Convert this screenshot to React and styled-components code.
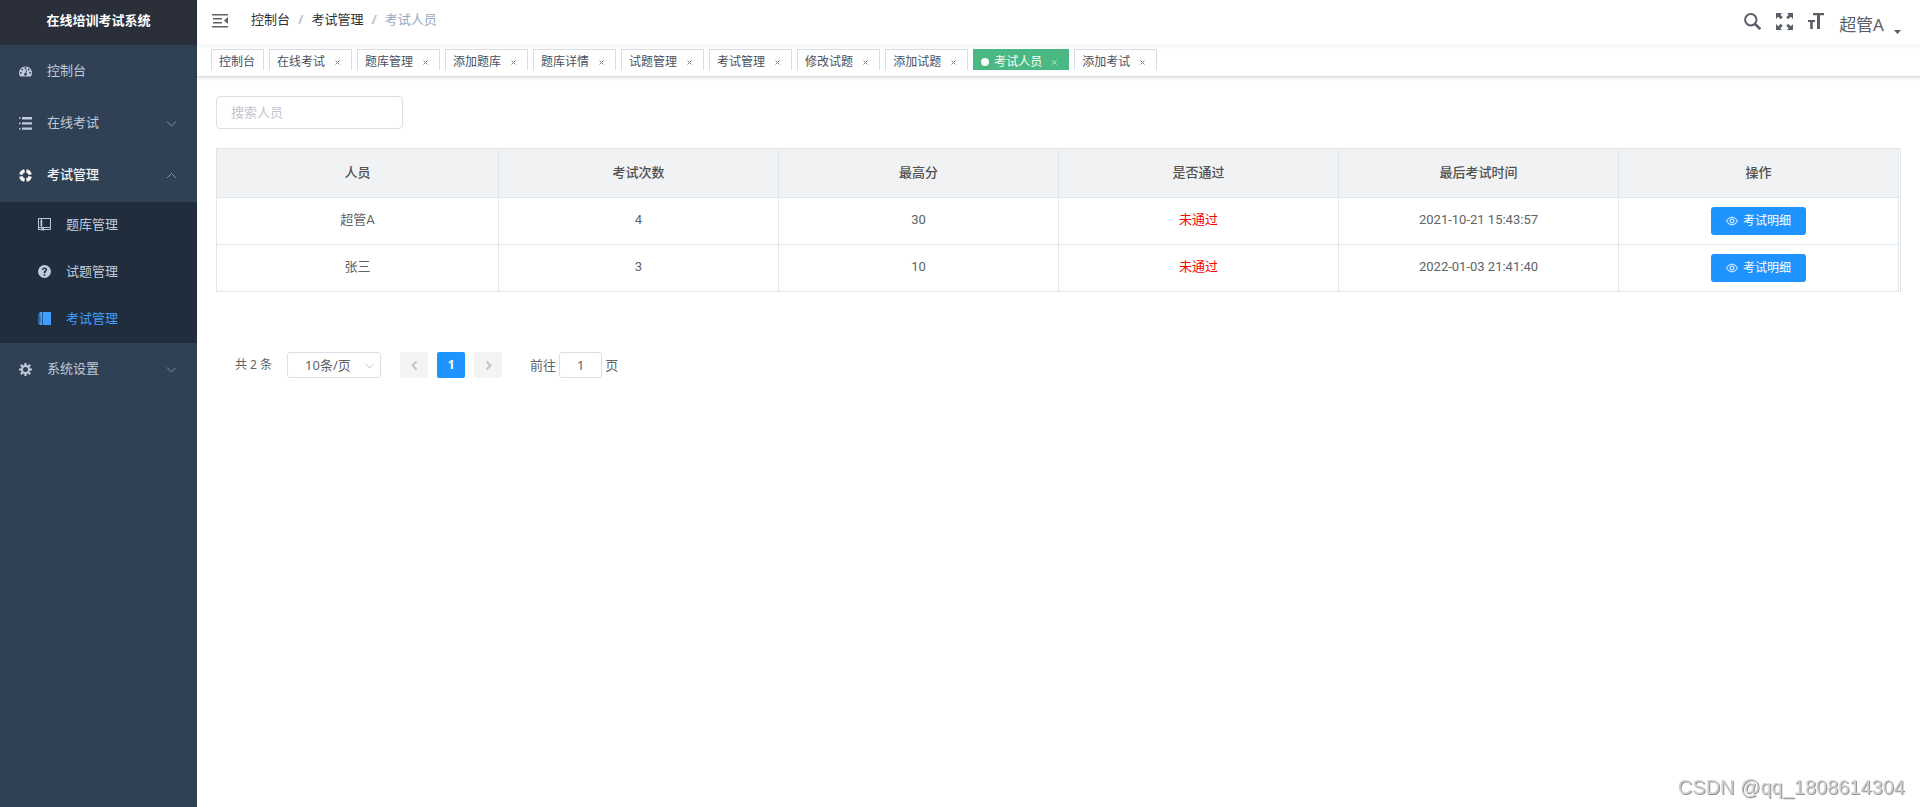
import React from "react";
import styled, { createGlobalStyle, css } from "styled-components";

const GlobalStyle = createGlobalStyle`
  *, *::before, *::after { box-sizing: border-box; }
  html, body, #root { height: 100%; }
  body {
    margin: 0;
    background: #fff;
    color: #606266;
    font: 13px/20px "Noto Sans", "Noto Sans CJK SC", sans-serif;
  }
  button, input, select { font: inherit; color: inherit; }
  button { cursor: pointer; }
  a { color: inherit; text-decoration: none; }
  ul, ol { list-style: none; margin: 0; padding: 0; }
`;

const Page = styled.div`
  display: flex;
  min-height: 100%;
`;

/* Sidebar */
const Sidebar = styled.aside`
  flex: none;
  width: 197px;
  background: #304156;
`;
const Brand = styled.h1`
  margin: 0;
  height: 45px;
  padding-top: 10px;
  background: #2b2f3a;
  color: #fff;
  font-size: 13px;
  line-height: 20px;
  font-weight: 700;
  text-align: center;
`;
const MenuItem = styled.a`
  display: flex;
  align-items: center;
  gap: 15px;
  height: 52px;
  padding: 0 20px 0 19px;
  color: ${(p) => (p.$open ? "#f4f4f5" : "#bfcbd9")};
  font-weight: ${(p) => (p.$open ? 500 : 400)};
`;
const MenuLabel = styled.span`
  flex: 1;
  padding-bottom: 2px;
`;
const SubMenu = styled.ul`
  margin-top: 1px;
  background: #1f2d3d;
`;
const SubItem = styled(MenuItem)`
  height: 47px;
  padding-left: 38px;
  padding-bottom: 2px;
  color: ${(p) => (p.$active ? "#409eff" : "#bfcbd9")};
`;
const Icon = styled.svg`
  flex: none;
  display: block;
  width: ${(p) => p.$size || 13}px;
  height: ${(p) => p.$size || 13}px;
  fill: currentColor;
`;
const LineIcon = styled(Icon)`
  fill: none;
  stroke: ${(p) => p.$color || "currentColor"};
  stroke-width: ${(p) => p.$weight || 1};
`;

/* Header */
const Main = styled.main`
  flex: 1;
  min-width: 0;
`;
const Navbar = styled.header`
  display: flex;
  align-items: center;
  height: 45px;
  padding: 0 19px 3px 15px;
  box-shadow: 0 1px 4px rgba(0, 21, 41, 0.08);
`;
const IconButton = styled.button`
  display: flex;
  padding: 0;
  border: 0;
  background: none;
`;
const Crumbs = styled.ol`
  display: flex;
  flex: 1;
  height: 24px;
  margin-left: 23px;
  color: #303133;
  li + li::before {
    content: "/";
    margin: 0 8px;
    color: #c0c4cc;
    font-weight: 700;
  }
`;
const Crumb = styled.li`
  color: ${(p) => (p.$current ? "#97a8be" : "inherit")};
`;
const Tools = styled.div`
  display: flex;
  align-items: center;
  gap: 15px;
  color: #5a5e66;
`;
const UserButton = styled(IconButton)`
  align-items: flex-end;
  gap: 10px;
  padding-top: 8px;
  font-size: 17px;
  line-height: 24px;
`;

const TagBar = styled.nav`
  height: 32px;
  padding: 4px 14px 0;
  border-bottom: 1px solid #d8dce5;
  box-shadow: 0 1px 3px rgba(0, 0, 0, 0.12);
`;
const TagList = styled.ul`
  display: flex;
  gap: 5px;
  height: 21px;
  overflow: hidden;
`;
const Tag = styled.li`
  display: flex;
  align-items: center;
  flex: none;
  height: 26px;
  padding: 0 7px;
  border: 1px solid #d8dce5;
  color: #495060;
  font-size: 12px;
  line-height: 24px;
  &:first-child { padding-right: 8px; }
  ${(p) =>
    p.$active &&
    css`
      border-color: #4ab883;
      background: #4ab883;
      color: #fff;
      &::before {
        content: "";
        width: 8px;
        height: 8px;
        margin-right: 5px;
        border-radius: 50%;
        background: #fff;
      }
    `}
`;
const CloseButton = styled(IconButton)`
  width: 13px;
  margin-left: 6px;
  justify-content: center;
  opacity: 0.7;
`;

/* Content */
const Content = styled.section`
  padding: 19px;
`;
const SearchInput = styled.input`
  display: block;
  width: 187px;
  height: 33px;
  padding: 0 14px 2px;
  border: 1px solid #dcdfe6;
  border-radius: 4px;
  background: #fff;
  &::placeholder { color: #c0c4cc; opacity: 1; }
`;
const TableFrame = styled.div`
  margin-top: 19px;
  padding-right: 1px;
  border: 1px solid #dfe6ec;
  border-bottom: 0;
`;
const Table = styled.table`
  width: 100%;
  table-layout: fixed;
  border-collapse: separate;
  border-spacing: 0;
  text-align: center;
`;
const cell = css`
  padding: 0 0 2px;
  border: solid #dfe6ec;
  border-width: 0 1px 1px 0;
`;
const HeadCell = styled.th`
  ${cell}
  width: 280px;
  height: 49px;
  background: #f1f2f4;
  color: #515151;
  font-weight: 500;
  &:first-child { width: auto; }
  @media (max-width: 1919px) { width: auto; }
`;
const Cell = styled.td`
  ${cell}
  height: 47px;
  color: ${(p) => (p.$fail ? "#f00" : "inherit")};
  font-family: Roboto, "Noto Sans CJK SC", sans-serif;
`;
const ActionCell = styled(Cell)`
  padding: 0;
`;
const DetailButton = styled.button`
  display: inline-flex;
  align-items: center;
  gap: 5px;
  height: 28px;
  padding: 0 15px;
  border: 0;
  border-radius: 3px;
  background: #1f94ff;
  color: #fff;
  font-size: 12px;
  vertical-align: middle;
`;

const Pagination = styled.footer`
  display: flex;
  align-items: center;
  margin-top: 60px;
  padding: 0 19px;
`;
const Total = styled.span`
  font-size: 12px;
`;
const SelectBox = styled.div`
  display: grid;
  align-items: center;
  width: 94px;
  margin: 0 19px 0 15px;
  & > * { grid-area: 1 / 1; }
  & > svg { justify-self: end; margin-right: 6px; pointer-events: none; }
`;
const PageSelect = styled.select`
  appearance: none;
  height: 26px;
  padding: 0 17px;
  border: 1px solid #dcdfe6;
  border-radius: 3px;
  background: #fff;
`;
const Pager = styled.div`
  display: flex;
  gap: 9px;
`;
const PageButton = styled.button`
  display: flex;
  align-items: center;
  justify-content: center;
  width: 28px;
  height: 26px;
  padding: 0;
  border: 0;
  border-radius: 2px;
  background: ${(p) => (p.$active ? "#1f94ff" : "#f4f4f5")};
  color: ${(p) => (p.$active ? "#fff" : "#c0c4cc")};
  font-size: 12px;
  font-weight: 700;
`;
const Jumper = styled.label`
  display: flex;
  align-items: center;
  gap: 3px;
  margin-left: 28px;
`;
const JumpInput = styled.input`
  width: 43px;
  height: 26px;
  padding: 0;
  border: 1px solid #dcdfe6;
  border-radius: 3px;
  text-align: center;
`;
const Watermark = styled.div`
  position: fixed;
  right: 15px;
  bottom: 8px;
  color: #d0d0d0;
  font: 20px/24px "Liberation Sans", sans-serif;
  text-shadow: 1px 1px 0 #949494;
  pointer-events: none;
`;

const Chevron = ({ up }) => (
  <LineIcon $size={11} $color="#8590a0" viewBox="0 0 11 11" aria-hidden="true">
    <path d={up ? "M1 8 5.500 3.500 10 8" : "M1 3.500 5.500 8 10 3.500"} />
  </LineIcon>
);

const DashboardIcon = () => (
  <Icon viewBox="0 0 128 100" aria-hidden="true">
    <path d="M27.429 63.638c0-2.508-.893-4.650-2.679-6.424-1.786-1.775-3.940-2.662-6.464-2.662-2.524 0-4.679.887-6.465 2.662-1.785 1.774-2.678 3.916-2.678 6.424 0 2.508.893 4.650 2.678 6.424 1.786 1.775 3.940 2.662 6.465 2.662 2.524 0 4.678-.887 6.464-2.662 1.786-1.775 2.679-3.916 2.679-6.424zm13.714-31.801c0-2.508-.893-4.650-2.679-6.424-1.785-1.775-3.940-2.662-6.464-2.662-2.524 0-4.679.887-6.464 2.662-1.786 1.774-2.679 3.916-2.679 6.424 0 2.508.893 4.650 2.679 6.424 1.785 1.774 3.940 2.662 6.464 2.662 2.524 0 4.679-.888 6.464-2.662 1.786-1.775 2.679-3.916 2.679-6.424zM71.714 65.980l7.215-27.116c.285-1.230.107-2.378-.536-3.443-.643-1.064-1.560-1.762-2.750-2.094-1.190-.33-2.333-.177-3.429.462-1.095.639-1.810 1.573-2.143 2.804l-7.214 27.116c-2.857.237-5.405 1.266-7.643 3.088-2.238 1.822-3.738 4.152-4.500 6.992-.952 3.644-.476 7.098 1.429 10.364 1.905 3.265 4.690 5.370 8.357 6.317 3.667.947 7.143.474 10.429-1.420 3.285-1.892 5.404-4.660 6.357-8.305.762-2.840.619-5.607-.429-8.305-1.047-2.697-2.762-4.850-5.143-6.460zm47.143-2.342c0-2.508-.893-4.650-2.678-6.424-1.786-1.775-3.940-2.662-6.465-2.662-2.524 0-4.678.887-6.464 2.662-1.786 1.774-2.679 3.916-2.679 6.424 0 2.508.893 4.650 2.679 6.424 1.786 1.775 3.940 2.662 6.464 2.662 2.524 0 4.679-.887 6.465-2.662 1.785-1.775 2.678-3.916 2.678-6.424zm-45.714-45.430c0-2.509-.893-4.650-2.679-6.425C68.679 10.010 66.524 9.122 64 9.122c-2.524 0-4.679.887-6.464 2.661-1.786 1.775-2.679 3.916-2.679 6.425 0 2.508.893 4.650 2.679 6.424 1.785 1.774 3.940 2.662 6.464 2.662 2.524 0 4.679-.888 6.464-2.662 1.786-1.775 2.679-3.916 2.679-6.424zm32 13.629c0-2.508-.893-4.650-2.679-6.424-1.785-1.775-3.940-2.662-6.464-2.662-2.524 0-4.679.887-6.464 2.662-1.786 1.774-2.679 3.916-2.679 6.424 0 2.508.893 4.650 2.679 6.424 1.785 1.774 3.940 2.662 6.464 2.662 2.524 0 4.679-.888 6.464-2.662 1.786-1.775 2.679-3.916 2.679-6.424zM128 63.638c0 12.351-3.357 23.780-10.071 34.286-.905 1.372-2.190 2.058-3.858 2.058H13.930c-1.667 0-2.953-.686-3.858-2.058C3.357 87.465 0 76.037 0 63.638c0-8.613 1.690-16.847 5.071-24.703C8.452 31.080 13 24.312 18.714 18.634c5.715-5.680 12.524-10.199 20.429-13.559C47.048 1.715 55.333.035 64 .035c8.667 0 16.952 1.680 24.857 5.040 7.905 3.360 14.714 7.880 20.429 13.559 5.714 5.678 10.262 12.446 13.643 20.301 3.380 7.856 5.071 16.090 5.071 24.703z" />
  </Icon>
);
const ListIcon = () => (
  <Icon viewBox="0 0 13 13" aria-hidden="true">
    <path d="M0 .2h1.600v1.600H0zM3 0h10v2.400H3zM0 5.600h1.600v1.600H0zM3 5.200h10v2.400H3zM0 11h1.600v1.600H0zM3 10.400h10v2.400H3z" />
  </Icon>
);
const RingIcon = () => (
  <LineIcon viewBox="0 0 13 13" $weight={3.4} aria-hidden="true">
    <path d="M7.400 1.880A4.700 4.700 0 0 1 11.120 5.600M11.120 7.400A4.700 4.700 0 0 1 7.400 11.120M5.600 11.120A4.700 4.700 0 0 1 1.880 7.400M1.880 5.600A4.700 4.700 0 0 1 5.600 1.880" />
  </LineIcon>
);
const GearIcon = () => (
  <LineIcon viewBox="0 0 14 14" aria-hidden="true">
    <circle cx="7" cy="7" r="3.800" strokeWidth="2.200" />
    <path d="M7 0v3M7 11v3M0 7h3M11 7h3M2 2l2 2M10 10l2 2M12 2l-2 2M4 10l-2 2" strokeWidth="2.400" />
  </LineIcon>
);
const BookIcon = () => (
  <LineIcon viewBox="0 0 13 13" aria-hidden="true">
    <path d="M3.500.5h9v9h-9zM.5 12V.5h3M2 3h2.500M2 5h2.500M2 7h2.500M.5 11.500h3M6 11.500h6.500v-2M.5 9.500h3" />
    <path d="M3.500 10v3l1.200-1L6 13v-3z" fill="currentColor" stroke="none" />
  </LineIcon>
);
const QuestionIcon = () => (
  <Icon viewBox="0 0 13 13" aria-hidden="true">
    <path fillRule="evenodd" d="M6.500 0a6.500 6.500 0 1 1 0 13 6.500 6.500 0 0 1 0-13zM5.700 9.200v1.600h1.600V9.200zM4 5h1.500c0-.8.400-1.300 1-1.300s1 .4 1 .9c0 1.200-1.800 1.300-1.800 3.200v.5h1.500c0-1.600 1.900-1.700 1.900-3.700C9.100 3.200 8 2.400 6.500 2.400S4 3.400 4 5z" />
  </Icon>
);
const NotebookIcon = () => (
  <Icon viewBox="0 0 13 13" aria-hidden="true">
    <path d="M4.600 0H13v13H4.600zM1.500 0H4v13H1.500v-1.500H0v-1h2.500v-1H0v-1h2.500v-1H0v-1h2.500v-1H0v-1h2.500v-1H0v-1h1.500z" />
  </Icon>
);
const FoldIcon = () => (
  <Icon $size={16} viewBox="0 0 16 16" aria-hidden="true">
    <path d="M0 1h16v1.600H0zM1 5h9v1.600H1zM1 9h9v1.600H1zM0 13h16v1.600H0zM16 4v7L12 7.500z" />
  </Icon>
);
const SearchIcon = () => (
  <LineIcon $size={17} $weight={2} viewBox="0 0 17 17" aria-hidden="true">
    <circle cx="6.800" cy="6.800" r="5.700" />
    <path d="m10.800 10.800 5.500 5.300" strokeWidth="2.600" />
  </LineIcon>
);
const FullscreenIcon = () => (
  <Icon $size={17} viewBox="0 0 17 17" aria-hidden="true">
    <path d="M0 0h6L4.300 1.700l2.500 2.500-2.100 2.100-2.500-2.500L0 6zM17 0v6l-2.200-2.200-2.500 2.500-2.100-2.100 2.500-2.500L11 0zM0 17v-6l2.200 2.200 2.500-2.500 2.100 2.100-2.500 2.500L6 17zM17 17h-6l1.700-1.700-2.500-2.500 2.100-2.100 2.500 2.500L17 11z" />
  </Icon>
);
const FontSizeIcon = () => (
  <Icon $size={16} viewBox="0 0 16 16" aria-hidden="true">
    <path d="M5 0h11v2.200h-4V16H9V2.200H5zM0 7h7v2H4.800v7H2.200V9H0z" />
  </Icon>
);
const CaretIcon = () => (
  <Icon $size={7} viewBox="0 0 7 7" aria-hidden="true">
    <path d="M0 0h7L3.500 4z" />
  </Icon>
);
const CloseIcon = () => (
  <LineIcon $size={5} viewBox="0 0 5 5" aria-hidden="true">
    <path d="m.5.5 4 4m0-4-4 4" />
  </LineIcon>
);
const EyeIcon = () => (
  <LineIcon $size={12} viewBox="0 0 12 12" aria-hidden="true">
    <path d="M.5 6C3.500.9 8.500.9 11.500 6 8.500 11.100 3.500 11.100.5 6z" />
    <circle cx="6" cy="6" r="2" />
  </LineIcon>
);
const ArrowIcon = ({ d, color = "currentColor", weight = 2 }) => (
  <LineIcon $size={11} $weight={weight} $color={color} viewBox="0 0 11 11" aria-hidden="true">
    <path d={d} />
  </LineIcon>
);

const tags = [
  "控制台", "在线考试", "题库管理", "添加题库", "题库详情", "试题管理",
  "考试管理", "修改试题", "添加试题", "考试人员", "添加考试",
];
const columns = ["人员", "考试次数", "最高分", "是否通过", "最后考试时间", "操作"];
const people = [
  { name: "超管A", times: 4, best: 30, result: "未通过", last: "2021-10-21 15:43:57" },
  { name: "张三", times: 3, best: 10, result: "未通过", last: "2022-01-03 21:41:40" },
];

export default function App() {
  return (
    <>
      <GlobalStyle />
      <Page>
        <Sidebar>
          <Brand>在线培训考试系统</Brand>
          <nav>
            <MenuItem href="#dashboard"><DashboardIcon /><MenuLabel>控制台</MenuLabel></MenuItem>
            <MenuItem href="#online"><ListIcon /><MenuLabel>在线考试</MenuLabel><Chevron /></MenuItem>
            <MenuItem href="#exam" $open><RingIcon /><MenuLabel>考试管理</MenuLabel><Chevron up /></MenuItem>
            <SubMenu>
              <li><SubItem href="#repo"><BookIcon /><MenuLabel>题库管理</MenuLabel></SubItem></li>
              <li><SubItem href="#question"><QuestionIcon /><MenuLabel>试题管理</MenuLabel></SubItem></li>
              <li><SubItem href="#exams" $active><NotebookIcon /><MenuLabel>考试管理</MenuLabel></SubItem></li>
            </SubMenu>
            <MenuItem href="#system"><GearIcon /><MenuLabel>系统设置</MenuLabel><Chevron /></MenuItem>
          </nav>
        </Sidebar>
        <Main>
          <Navbar>
            <IconButton aria-label="折叠菜单"><FoldIcon /></IconButton>
            <Crumbs>
              <Crumb><a href="#dashboard">控制台</a></Crumb>
              <Crumb><a href="#exam">考试管理</a></Crumb>
              <Crumb $current>考试人员</Crumb>
            </Crumbs>
            <Tools>
              <IconButton aria-label="搜索"><SearchIcon /></IconButton>
              <IconButton aria-label="全屏"><FullscreenIcon /></IconButton>
              <IconButton aria-label="字号"><FontSizeIcon /></IconButton>
              <UserButton>超管A<CaretIcon /></UserButton>
            </Tools>
          </Navbar>
          <TagBar>
            <TagList>
              {tags.map((name, i) => (
                <Tag key={name} $active={name === "考试人员"}>
                  <a href={`#tag-${i}`}>{name}</a>
                  {i > 0 && <CloseButton aria-label={`关闭${name}`}><CloseIcon /></CloseButton>}
                </Tag>
              ))}
            </TagList>
          </TagBar>
          <Content>
            <SearchInput type="text" placeholder="搜索人员" aria-label="搜索人员" />
            <TableFrame>
              <Table>
                <thead>
                  <tr>{columns.map((c) => <HeadCell key={c} scope="col">{c}</HeadCell>)}</tr>
                </thead>
                <tbody>
                  {people.map((p) => (
                    <tr key={p.name}>
                      <Cell>{p.name}</Cell>
                      <Cell>{p.times}</Cell>
                      <Cell>{p.best}</Cell>
                      <Cell $fail>{p.result}</Cell>
                      <Cell>{p.last}</Cell>
                      <ActionCell><DetailButton><EyeIcon />考试明细</DetailButton></ActionCell>
                    </tr>
                  ))}
                </tbody>
              </Table>
            </TableFrame>
            <Pagination>
              <Total>共 2 条</Total>
              <SelectBox>
                <PageSelect aria-label="每页条数" defaultValue="10">
                  <option value="10">10条/页</option>
                  <option value="20">20条/页</option>
                </PageSelect>
                <ArrowIcon d="M1.500 4 5.500 8l4-4" color="#c0c4cc" weight={1} />
              </SelectBox>
              <Pager>
                <PageButton aria-label="上一页"><ArrowIcon d="M7.500 1.500 3.500 5.500l4 4" /></PageButton>
                <PageButton $active>1</PageButton>
                <PageButton aria-label="下一页"><ArrowIcon d="m3.500 1.500 4 4-4 4" /></PageButton>
              </Pager>
              <Jumper>前往<JumpInput type="text" defaultValue="1" />页</Jumper>
            </Pagination>
          </Content>
        </Main>
      </Page>
      <Watermark>CSDN @qq_1808614304</Watermark>
    </>
  );
}
